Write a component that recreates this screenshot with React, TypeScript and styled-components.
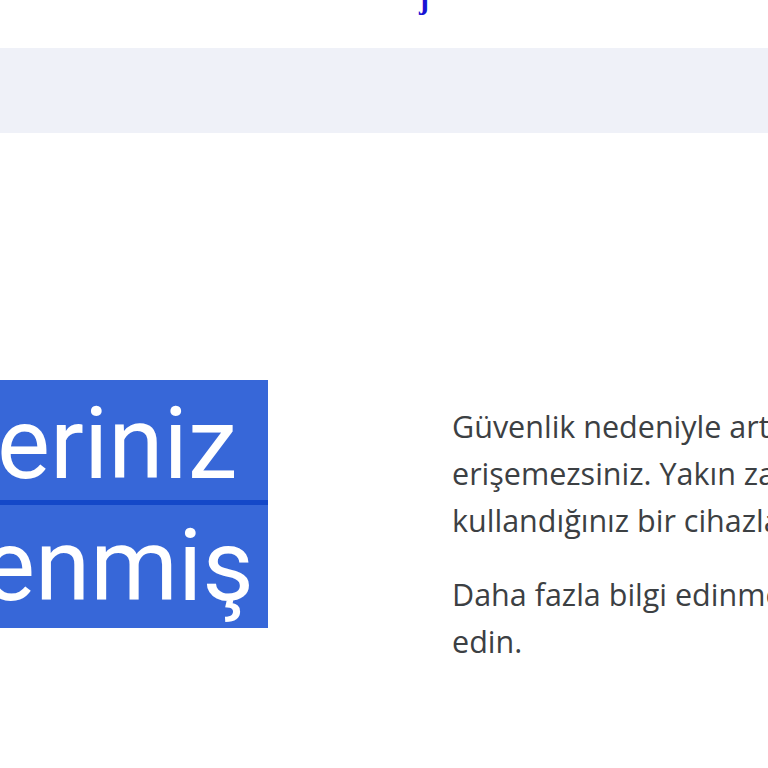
import React from "react";
import styled, { createGlobalStyle } from "styled-components";

const Global = createGlobalStyle`
  html, body { margin: 0; padding: 0; background: #ffffff; overflow: hidden; }
  body { width: 768px; height: 768px; }
`;

const Page = styled.div`
  width: 768px;
  height: 768px;
  overflow: hidden;
  display: flex;
  flex-direction: column;
  background: #ffffff;
`;

const TopBar = styled.div`
  height: 48px;
  overflow: hidden;
  display: flex;
  justify-content: flex-start;
  padding-left: 419px;
`;

const LinkGlyph = styled.span`
  font-family: "Liberation Serif", serif;
  font-size: 30px;
  line-height: 30px;
  color: #1a14d4;
  margin-top: -16px;
  font-weight: 700;
`;

const Band = styled.div`
  height: 85px;
  background: #eff1f8;
`;

const Main = styled.main`
  display: flex;
  align-items: flex-start;
  padding-top: 247px;
  gap: 184px;
`;

const HeadingCol = styled.div`
  width: 268px;
  flex: none;
  display: flex;
  flex-direction: column;
`;

const HeadingLine = styled.div<{ $first?: boolean; $indent: number }>`
  background: #3767d8;
  color: #ffffff;
  font-family: Roboto, "Open Sans", sans-serif;
  font-size: 100px;
  line-height: 112px;
  white-space: nowrap;
  overflow: hidden;
  padding-top: ${(p) => (p.$first ? "8px" : "5px")};
  padding-bottom: ${(p) => (p.$first ? "0" : "6px")};
  border-bottom: ${(p) => (p.$first ? "5px solid #1448c8" : "0")};
  text-indent: ${(p) => p.$indent}px;
`;

const TextCol = styled.div`
  flex: none;
  width: 660px;
  padding-top: 23px;
  display: flex;
  flex-direction: column;
  gap: 27px;
`;

const Para = styled.p`
  margin: 0;
  font-family: "Open Sans", Roboto, sans-serif;
  font-size: 30.5px;
  line-height: 47px;
  color: #3c4043;
  white-space: nowrap;
`;

export default function App() {
  return (
    <Page>
      <Global />
      <TopBar>
        <LinkGlyph>j</LinkGlyph>
      </TopBar>
      <Band />
      <Main>
        <HeadingCol>
          <HeadingLine $first $indent={-3}>
            eriniz
          </HeadingLine>
          <HeadingLine $indent={-18}>enmiş</HeadingLine>
        </HeadingCol>
        <TextCol>
          <Para>
            Güvenlik nedeniyle artık bu hesaba
            <br />
            erişemezsiniz. Yakın zamanda
            <br />
            kullandığınız bir cihazla tekrar deneyin.
          </Para>
          <Para>
            Daha fazla bilgi edinmek için ziyaret
            <br />
            edin.
          </Para>
        </TextCol>
      </Main>
    </Page>
  );
}
